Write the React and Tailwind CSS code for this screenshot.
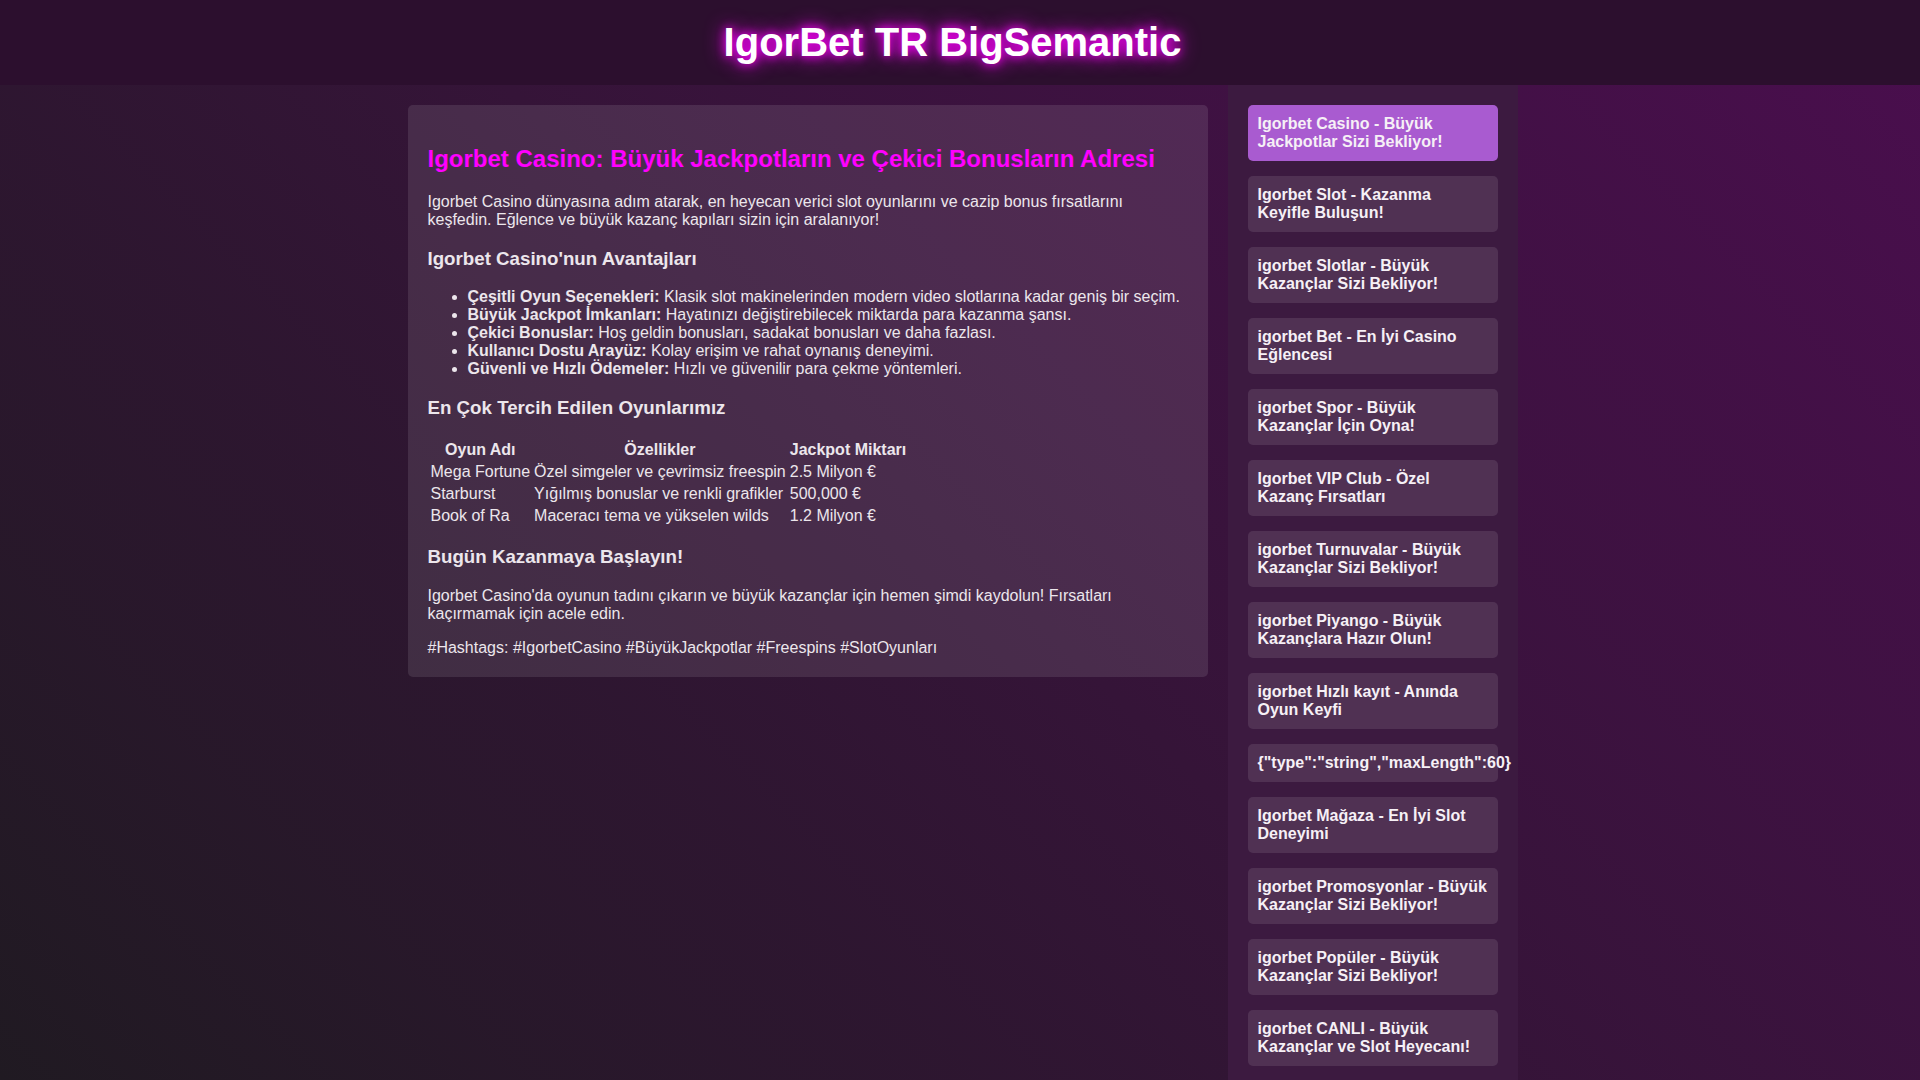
const links = [
    "Igorbet Casino - Büyük Jackpotlar Sizi Bekliyor!",
    "Igorbet Slot - Kazanma Keyifle Buluşun!",
    "igorbet Slotlar - Büyük Kazançlar Sizi Bekliyor!",
    "igorbet Bet - En İyi Casino Eğlencesi",
    "igorbet Spor - Büyük Kazançlar İçin Oyna!",
    "Igorbet VIP Club - Özel Kazanç Fırsatları",
    "igorbet Turnuvalar - Büyük Kazançlar Sizi Bekliyor!",
    "igorbet Piyango - Büyük Kazançlara Hazır Olun!",
    "igorbet Hızlı kayıt - Anında Oyun Keyfi",
    '{"type":"string","maxLength":60}',
    "Igorbet Mağaza - En İyi Slot Deneyimi",
    "igorbet Promosyonlar - Büyük Kazançlar Sizi Bekliyor!",
    "igorbet Popüler - Büyük Kazançlar Sizi Bekliyor!",
    "igorbet CANLI - Büyük Kazançlar ve Slot Heyecanı!",
]

const perks = [
    ["Çeşitli Oyun Seçenekleri:", "Klasik slot makinelerinden modern video slotlarına kadar geniş bir seçim."],
    ["Büyük Jackpot İmkanları:", "Hayatınızı değiştirebilecek miktarda para kazanma şansı."],
    ["Çekici Bonuslar:", "Hoş geldin bonusları, sadakat bonusları ve daha fazlası."],
    ["Kullanıcı Dostu Arayüz:", "Kolay erişim ve rahat oynanış deneyimi."],
    ["Güvenli ve Hızlı Ödemeler:", "Hızlı ve güvenilir para çekme yöntemleri."],
]

const games = [
    ["Mega Fortune", "Özel simgeler ve çevrimsiz freespin", "2.5 Milyon €"],
    ["Starburst", "Yığılmış bonuslar ve renkli grafikler", "500,000 €"],
    ["Book of Ra", "Maceracı tema ve yükselen wilds", "1.2 Milyon €"],
]

// ── Header ───────────────────────────────────────────────────────────────────
function Header() {
    return (
        <header className="bg-[#2c0f2e] py-[20px] pr-[15px] text-center">
            <h1 className="text-[40px] font-bold leading-[45px] text-white [text-shadow:0_0_10px_#ff00ff,0_0_20px_#ff00ff]">
                IgorBet TR BigSemantic
            </h1>
        </header>
    )
}

// ── Article card ─────────────────────────────────────────────────────────────
function Article() {
    return (
        <article className="w-[800px] shrink-0 self-start mt-[20px] rounded-[5px] bg-white/10 p-[20px] text-[16px] text-[#ece6ec]">
            <h2 className="my-[19.92px] text-[24px] font-bold text-[#ff00ff]">
                Igorbet Casino: Büyük Jackpotların ve Çekici Bonusların Adresi
            </h2>
            <p className="my-4">
                Igorbet Casino dünyasına adım atarak, en heyecan verici slot oyunlarını ve cazip bonus fırsatlarını keşfedin. Eğlence ve büyük kazanç kapıları sizin için aralanıyor!
            </p>
            <h3 className="my-[18.72px] text-[18.72px] font-bold">Igorbet Casino'nun Avantajları</h3>
            <ul className="my-4 list-disc pl-10">
                {perks.map(([b, t]) => (
                    <li key={b}>
                        <strong className="font-bold">{b}</strong> {t}
                    </li>
                ))}
            </ul>
            <h3 className="my-[18.72px] text-[18.72px] font-bold">En Çok Tercih Edilen Oyunlarımız</h3>
            <table className="border-separate border-spacing-[2px]">
                <thead>
                    <tr>
                        <th className="p-[1px] font-bold text-center">Oyun Adı</th>
                        <th className="p-[1px] font-bold text-center">Özellikler</th>
                        <th className="p-[1px] font-bold text-center">Jackpot Miktarı</th>
                    </tr>
                </thead>
                <tbody>
                    {games.map((row) => (
                        <tr key={row[0]}>
                            {row.map((c) => (
                                <td key={c} className="p-[1px]">{c}</td>
                            ))}
                        </tr>
                    ))}
                </tbody>
            </table>
            <h3 className="my-[18.72px] text-[18.72px] font-bold">Bugün Kazanmaya Başlayın!</h3>
            <p className="my-4">
                Igorbet Casino'da oyunun tadını çıkarın ve büyük kazançlar için hemen şimdi kaydolun! Fırsatları kaçırmamak için acele edin.
            </p>
            <p className="mt-4">#Hashtags: #IgorbetCasino #BüyükJackpotlar #Freespins #SlotOyunları</p>
        </article>
    )
}

// ── Sidebar ──────────────────────────────────────────────────────────────────
function Sidebar() {
    return (
        <aside className="w-[290px] shrink-0 bg-[#3c1a40] p-[20px] flex flex-col gap-[15px]">
            {links.map((l, i) => (
                <a
                    key={l}
                    href="#"
                    className={`block rounded-[5px] px-[10px] py-[10px] text-[16px] font-bold text-[#f6f0f6] ${
                        i === 0 ? "bg-[#a95bd0]" : "bg-white/10"
                    }`}
                >
                    {l}
                </a>
            ))}
        </aside>
    )
}

export default function App() {
    return (
        <div className="h-screen overflow-hidden bg-[linear-gradient(45deg,#201a22,#4a0e4e)] font-['Liberation_Sans',Arial,sans-serif] leading-[normal]">
            <Header />
            <main className="flex justify-center gap-[20px] pl-[5px]">
                <Article />
                <Sidebar />
            </main>
        </div>
    )
}
